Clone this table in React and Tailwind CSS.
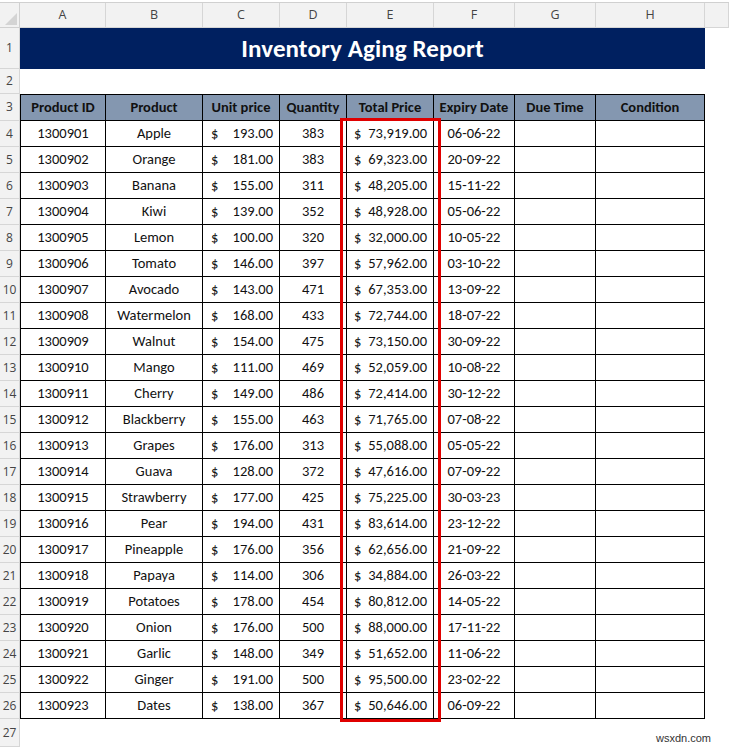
import React from 'react';

const rows = [
  ['1300901', 'Apple', '193.00', '383', '73,919.00', '06-06-22'],
  ['1300902', 'Orange', '181.00', '383', '69,323.00', '20-09-22'],
  ['1300903', 'Banana', '155.00', '311', '48,205.00', '15-11-22'],
  ['1300904', 'Kiwi', '139.00', '352', '48,928.00', '05-06-22'],
  ['1300905', 'Lemon', '100.00', '320', '32,000.00', '10-05-22'],
  ['1300906', 'Tomato', '146.00', '397', '57,962.00', '03-10-22'],
  ['1300907', 'Avocado', '143.00', '471', '67,353.00', '13-09-22'],
  ['1300908', 'Watermelon', '168.00', '433', '72,744.00', '18-07-22'],
  ['1300909', 'Walnut', '154.00', '475', '73,150.00', '30-09-22'],
  ['1300910', 'Mango', '111.00', '469', '52,059.00', '10-08-22'],
  ['1300911', 'Cherry', '149.00', '486', '72,414.00', '30-12-22'],
  ['1300912', 'Blackberry', '155.00', '463', '71,765.00', '07-08-22'],
  ['1300913', 'Grapes', '176.00', '313', '55,088.00', '05-05-22'],
  ['1300914', 'Guava', '128.00', '372', '47,616.00', '07-09-22'],
  ['1300915', 'Strawberry', '177.00', '425', '75,225.00', '30-03-23'],
  ['1300916', 'Pear', '194.00', '431', '83,614.00', '23-12-22'],
  ['1300917', 'Pineapple', '176.00', '356', '62,656.00', '21-09-22'],
  ['1300918', 'Papaya', '114.00', '306', '34,884.00', '26-03-22'],
  ['1300919', 'Potatoes', '178.00', '454', '80,812.00', '14-05-22'],
  ['1300920', 'Onion', '176.00', '500', '88,000.00', '17-11-22'],
  ['1300921', 'Garlic', '148.00', '349', '51,652.00', '11-06-22'],
  ['1300922', 'Ginger', '191.00', '500', '95,500.00', '23-02-22'],
  ['1300923', 'Dates', '138.00', '367', '50,646.00', '06-09-22'],
];

const cols = 'grid grid-cols-[20px_86px_97px_77px_67px_87px_81px_81px_109px_1fr]';
const letters = ['A', 'B', 'C', 'D', 'E', 'F', 'G', 'H', ''];

function RowNum({ n }) {
  return (
    <div className="flex items-center justify-center bg-[#f2f2f2] border-r border-b border-[#d6d6d6] text-[12px] text-[#444] [font-family:'Open_Sans',sans-serif]">
      {n}
    </div>
  );
}

export default function App() {
  const cell = 'border-r border-b border-black flex items-center pt-[1px]';
  return (
    <div className="relative w-[729px] h-[747px] bg-white overflow-hidden [font-family:Carlito,Calibri,Lato,sans-serif] text-[#111]">
      {/* top strip */}
      <div className="h-[3px] border-b border-[#d0d0d0] bg-white" />

      {/* column letters */}
      <div className={`${cols} h-[25px]`}>
        <div className="relative bg-[#f2f2f2] border-r border-b border-[#d0d0d0]">
          <div className="absolute right-[2px] bottom-[2px] w-0 h-0 border-l-[12px] border-l-transparent border-b-[12px] border-b-[#d4d4d4]" />
        </div>
        {letters.map((l, i) => (
          <div key={i} className="flex items-center justify-center bg-[#f2f2f2] border-r border-b border-[#d6d6d6] text-[12.5px] text-[#444] [font-family:'Open_Sans',sans-serif]">
            {l}
          </div>
        ))}
      </div>

      {/* row 1 title */}
      <div className={`${cols} h-[41px]`}>
        <RowNum n={1} />
        <div className="col-span-8 bg-[#002060] flex items-center justify-center text-white font-bold text-[25px] tracking-[0.1px]">
          Inventory Aging Report
        </div>
        <div />
      </div>

      {/* row 2 */}
      <div className={`${cols} h-[25px]`}>
        <RowNum n={2} />
        <div className="col-span-9" />
      </div>

      {/* row 3 header */}
      <div className={`${cols} h-[27px]`}>
        <RowNum n={3} />
        {['Product ID', 'Product', 'Unit price', 'Quantity', 'Total Price', 'Expiry Date', 'Due Time', 'Condition'].map((h, i) => (
          <div key={h} className={`${cell} border-t justify-center bg-[#8497b0] font-bold text-[14.5px] text-[#111] ${i === 0 ? 'border-l' : ''}`}>
            {h}
          </div>
        ))}
        <div />
      </div>

      {/* data rows */}
      {rows.map((r, idx) => (
        <div key={r[0]} className={`${cols} h-[26px]`}>
          <RowNum n={idx + 4} />
          <div className={`${cell} border-l justify-center text-[14.5px]`}>{r[0]}</div>
          <div className={`${cell} justify-center text-[14.5px]`}>{r[1]}</div>
          <div className={`${cell} justify-between pl-[8px] pr-[6px] text-[14.5px]`}>
            <span>$</span>
            <span>{r[2]}</span>
          </div>
          <div className={`${cell} justify-center text-[14.5px]`}>{r[3]}</div>
          <div className={`${cell} justify-between pl-[7px] pr-[6px] text-[14.5px]`}>
            <span>$</span>
            <span>{r[4]}</span>
          </div>
          <div className={`${cell} justify-center text-[14.5px]`}>{r[5]}</div>
          <div className={cell} />
          <div className={cell} />
          <div />
        </div>
      ))}

      {/* row 27 */}
      <div className={`${cols} h-[28px]`}>
        <RowNum n={27} />
        <div className="col-span-9" />
      </div>

      {/* highlight box */}
      <div className="absolute left-[340px] top-[118px] w-[101px] h-[604px] border-[3px] border-[#e00000]" />

      {/* watermark */}
      <div className="absolute left-[656px] top-[730px] text-[11px] text-[#333] [font-family:'Liberation_Sans',Arial,sans-serif]">
        wsxdn.com
      </div>
    </div>
  );
}
